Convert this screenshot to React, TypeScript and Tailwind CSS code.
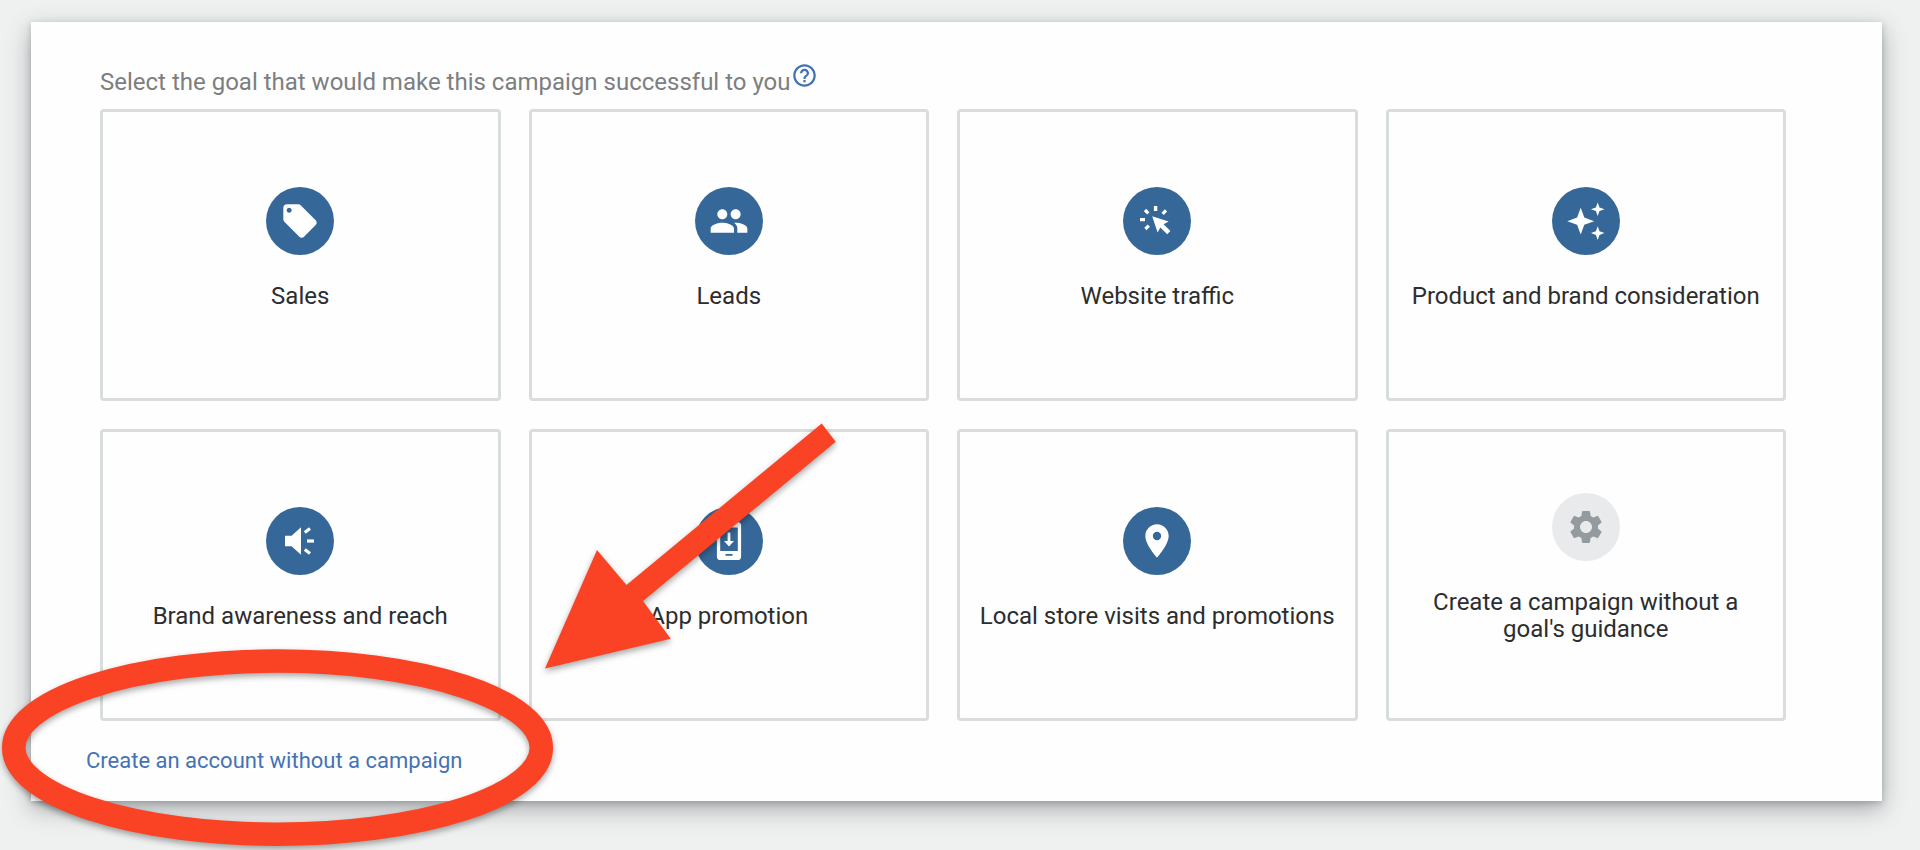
import React from 'react';
import { MdGroup, MdHelpOutline, MdLocalOffer, MdPlace, MdSettings } from 'react-icons/md';

type IconProps = { className?: string };

interface Goal {
  name: string;
  icon: React.ComponentType<IconProps>;
  muted?: boolean;
}

const ClickIcon: React.FC<IconProps> = ({ className }) => (
  <svg viewBox="-20 -20 40 40" className={className} fill="currentColor" aria-hidden="true">
    <path d="M-4.8-4.8 11.6.6 6.6 3.2 13.4 10 10.2 13.2 3.4 6.4.6 11.6z" />
    <path d="M-3.1-15h3.4v5h-3.4zM-17-3.1h5v3.4h-5z" />
    <path d="M-12-11l3.4 3.4M9-10.6 5.6-7.2M-11.6 8l3.4-3.4" stroke="currentColor" strokeWidth="3.2" />
  </svg>
);

const SparklesIcon: React.FC<IconProps> = ({ className }) => (
  <svg viewBox="-20 -20 40 40" className={className} fill="currentColor" aria-hidden="true">
    <path d="M-5.3-13.2-1.7-3.4 8.1.2-1.7 3.8-5.3 13.6-8.9 3.8-18.7.2-8.9-3.4z" />
    <path d="M11.7-18.5l1.8 5 5 1.8-5 1.8-1.8 5-1.8-5-5-1.8 5-1.8z" />
    <path d="M11.7 5.3l1.8 5 5 1.8-5 1.8-1.8 5-1.8-5-5-1.8 5-1.8z" />
  </svg>
);

const SpeakerIcon: React.FC<IconProps> = ({ className }) => (
  <svg viewBox="-20 -20 40 40" className={className} fill="currentColor" aria-hidden="true">
    <path d="M-15-5.2h6.6L1-13.8v27.6L-8.4 5.2H-15z" />
    <path d="M7-1.6h7v3.2H7z" />
    <path d="M4.8-8.4 10-12.4M4.8 8.4 10 12.4" stroke="currentColor" strokeWidth="3.2" />
  </svg>
);

const PhoneIcon: React.FC<IconProps> = ({ className }) => (
  <svg viewBox="-20 -20 40 40" className={className} fill="currentColor" aria-hidden="true">
    <path
      fillRule="evenodd"
      d="M-8.5-19h17a3.6 3.6 0 0 1 3.6 3.6v30.8a3.6 3.6 0 0 1-3.6 3.6h-17a3.6 3.6 0 0 1-3.6-3.6v-30.8A3.6 3.6 0 0 1-8.5-19zM-8.8-13.4v23.4H8.8v-23.4zM-3.5 13v1.8h7v-1.8z"
    />
    <path d="M-1.4-8.5h2.8V0H5L0 5.4-5 0h3.6z" />
  </svg>
);

const goals: Goal[] = [
  { name: 'Sales', icon: MdLocalOffer },
  { name: 'Leads', icon: MdGroup },
  { name: 'Website traffic', icon: ClickIcon },
  { name: 'Product and brand consideration', icon: SparklesIcon },
  { name: 'Brand awareness and reach', icon: SpeakerIcon },
  { name: 'App promotion', icon: PhoneIcon },
  { name: 'Local store visits and promotions', icon: MdPlace },
  { name: "Create a campaign without a goal's guidance", icon: MdSettings, muted: true },
];

const GoalCard: React.FC<{ goal: Goal }> = ({ goal }) => (
  <button
    type="button"
    className="flex min-h-[292px] cursor-pointer flex-col items-center justify-center gap-7 rounded-sm border-3 border-[#dadddd] px-2 pb-[14px] text-[#2c2d2f]"
  >
    <span
      className={`flex size-[68px] items-center justify-center rounded-full ${
        goal.muted ? 'bg-[#e8eaec] text-[#949b9f]' : 'bg-[#356798] text-white'
      }`}
    >
      <goal.icon className="size-10" />
    </span>
    <span className="max-w-[360px] text-2xl leading-[27px]">{goal.name}</span>
  </button>
);

// Red ellipse and arrow that point out the link under the cards
const Callout: React.FC = () => (
  <svg
    width="860"
    height="450"
    viewBox="0 400 860 450"
    className="pointer-events-none absolute top-[400px] left-0 drop-shadow-[0_3px_3px_rgba(0,0,0,0.35)]"
    aria-hidden="true"
  >
    <ellipse cx="277.5" cy="747.7" rx="263.8" ry="86.6" fill="none" stroke="#fa4224" strokeWidth="23.5" />
    <path d="M821.7 423.5 835.7 441.7 643 601 670.7 638.7 545 668.5 597 550 626.5 585z" fill="#fa4224" />
  </svg>
);

const App: React.FC = () => {
  return (
    <div className="relative min-h-screen overflow-hidden bg-[#eff1f1] pt-[22px] pr-[38px] pb-[50px] pl-[31px] font-[Roboto,sans-serif]">
      <main className="bg-[#fefefe] pt-10 pr-24 pb-6 pl-[69px] shadow-[0_2px_6px_rgba(60,64,67,0.25),0_8px_22px_rgba(60,64,67,0.4)]">
        <div className="flex items-start pb-[11px]">
          <h1 className="pt-1 text-2xl leading-8 text-[#7d7e80]">
            Select the goal that would make this campaign successful to you
          </h1>
          <button type="button" aria-label="Help" className="cursor-pointer text-[#4470b4]">
            <MdHelpOutline className="size-[27px]" />
          </button>
        </div>
        <section className="grid grid-cols-4 gap-7">
          {goals.map((goal) => (
            <GoalCard key={goal.name} goal={goal} />
          ))}
        </section>
        <a href="#" className="-ml-[14px] mt-6 inline-block text-[22px] leading-8 text-[#4472b5]">
          Create an account without a campaign
        </a>
      </main>
      <Callout />
    </div>
  );
};

export default App;
